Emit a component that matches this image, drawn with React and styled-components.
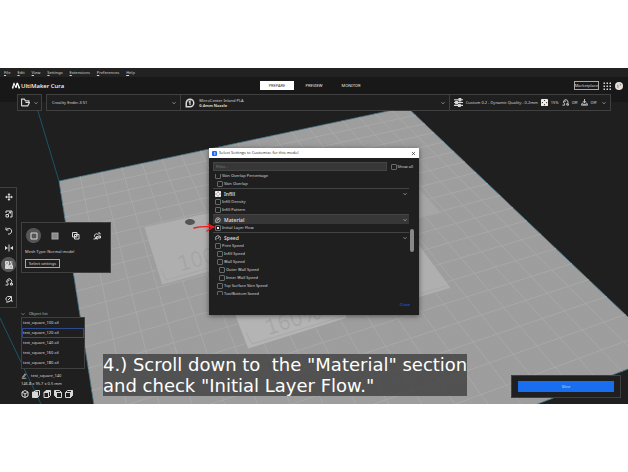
import React from "react";
import styled, { createGlobalStyle } from "styled-components";

const GlobalStyle = createGlobalStyle`
  * {
    box-sizing: border-box;
  }

  body {
    margin: 0;
    background: #fff;
    color: #d8d8d8;
    font-family: "Noto Sans", "Open Sans", sans-serif;
    font-size: 4px;
    line-height: 6px;
  }

  button, input {
    font: inherit;
    color: inherit;
  }
`;

const Page = styled.div`
  display: flex;
  flex-direction: column;
  min-height: 100vh;
  padding: 68px 0;
`;

const Window = styled.main`
  position: relative;
  display: flex;
  flex: 1;
  flex-direction: column;
  overflow: hidden;
  background: #1f1f1f;
`;

const Layer = styled.svg`
  position: absolute;
  inset: 0;
  width: 100%;
  height: 100%;
  pointer-events: none;
`;

const MenuBar = styled.nav`
  position: relative;
  display: flex;
  gap: 7px;
  height: 9px;
  padding: 0 4px;
  background: #222;
  line-height: 9px;
`;

const MenuLink = styled.a`
  color: #d4d4d4;
  text-decoration: none;

  &::first-letter {
    text-decoration: underline;
  }
`;

const TopBar = styled.header`
  position: relative;
  display: grid;
  grid-template-columns: 1fr auto 1fr;
  align-items: center;
  height: 17px;
  padding: 0 5px;
  background: #181818;
`;

const Brand = styled.h1`
  display: flex;
  align-items: center;
  gap: 1px;
  margin: 0;
  padding-left: 7px;
  color: #fff;
  font-size: 6px;
  font-weight: 500;
  line-height: 8px;
`;

const Stages = styled.nav`
  display: flex;
  gap: 3px;
`;

const StageButton = styled.button`
  width: 34px;
  height: 9px;
  padding: 0;
  border: 0;
  background: ${props => (props.$active ? "#fff" : "transparent")};
  color: ${props => (props.$active ? "#333" : "#e8e8e8")};
`;

const Account = styled.div`
  display: flex;
  align-items: center;
  justify-content: flex-end;
  gap: 4px;
`;

const OutlineButton = styled.button`
  height: 9px;
  padding: 0 ${props => props.$pad || 0}px;
  border: 1px solid #a8a8a8;
  background: transparent;
  line-height: 6px;
`;

const ConfigBar = styled.section`
  position: relative;
  display: flex;
  gap: 4px;
  height: 17px;
  padding: 0 17px;
  background: linear-gradient(#181818 50%, transparent 50%);
`;

const FileButton = styled.button`
  display: flex;
  align-items: center;
  justify-content: space-between;
  width: 25px;
  padding: 0 3px;
  border: 1px solid #404040;
  background: #1f1f1f;
`;

const ConfigGroup = styled.div`
  display: grid;
  flex: 1;
  grid-template-columns: 134fr 270fr 162fr;
  border: 1px solid #404040;
  background: #1f1f1f;
`;

const ConfigButton = styled.button`
  display: flex;
  align-items: center;
  gap: ${props => props.$gap || 4}px;
  min-width: 0;
  padding: 0 4px;
  border: 0;
  border-left: 1px solid ${props => (props.$first ? "transparent" : "#404040")};
  background: transparent;
  text-align: left;
  line-height: 5px;
  white-space: nowrap;

  > :last-child {
    margin-left: auto;
  }
`;

const Workspace = styled.section`
  position: relative;
  display: flex;
  flex: 1;
  flex-direction: column;
  gap: 3px;
  padding-top: 76px;
`;

const ToolRow = styled.div`
  display: flex;
  align-items: flex-start;
  gap: 4px;
`;

const Toolbar = styled.div`
  display: flex;
  flex-direction: column;
  width: 17px;
  border: 1px solid #404040;
  border-left: 0;
  background: #1f1f1f;
`;

const ToolButton = styled.button`
  display: grid;
  place-items: center;
  width: 17px;
  height: 17px;
  padding: 0;
  border: 0;
  background: ${props =>
    props.$active ? "radial-gradient(circle, #555 7px, transparent 8px)" : "none"};
`;

const ToolPanel = styled.div`
  display: flex;
  flex-direction: column;
  align-items: flex-start;
  gap: 4px;
  width: 90px;
  margin-top: 35px;
  padding: 4px 3px;
  border: 1px solid #404040;
  background: #1f1f1f;
`;

const MeshTypes = styled.div`
  display: flex;
  gap: 4px;
  margin-bottom: 1px;
`;

const ObjectPanel = styled.section`
  width: 64px;
  margin-left: 21px;
`;

const ObjectHeader = styled.h2`
  display: flex;
  align-items: center;
  gap: 4px;
  margin: 0;
  font-size: 4px;
  font-weight: 400;
  color: #bbb;
`;

const ObjectList = styled.ul`
  margin: 0;
  padding: 0;
  border: 1px solid #404040;
  background: #1f1f1f;
  list-style: none;
`;

const ObjectItem = styled.li`
  border: 1px solid ${props => (props.$selected ? "#2c4a8c" : "transparent")};
  line-height: 8px;
`;

const ObjectInfo = styled.div`
  display: flex;
  flex-direction: column;
  gap: 2px;
  padding-top: 4px;
`;

const InfoLine = styled.div`
  display: flex;
  align-items: center;
  gap: 4px;
`;

const Views = styled.div`
  display: flex;
  gap: 3px;
  padding-top: 1px;
`;

const ViewButton = styled.button`
  display: flex;
  padding: 0;
  border: 0;
  background: none;
`;

const SlicePanel = styled.div`
  position: absolute;
  right: 7px;
  bottom: 6px;
  width: 110px;
  padding: 5px 6px;
  border: 1px solid #404040;
  background: #1f1f1f;
`;

const SliceButton = styled.button`
  display: block;
  width: 100%;
  height: 11px;
  padding: 0;
  border: 0;
  background: #196ef0;
`;

const Dialog = styled.section`
  position: absolute;
  top: 80px;
  left: 50%;
  width: 210px;
  margin-left: -105px;
  background: #1f1f1f;
  box-shadow: 0 1px 5px rgba(0, 0, 0, 0.5);
`;

const DialogTitle = styled.header`
  display: flex;
  align-items: center;
  gap: 2px;
  height: 10px;
  padding: 0 3px;
  background: #fff;
  color: #222;
`;

const TitleText = styled.h2`
  flex: 1;
  margin: 0;
  font-family: "Open Sans", sans-serif;
  font-size: 4px;
  font-weight: 400;
`;

const CloseButton = styled.button`
  display: flex;
  padding: 0;
  border: 0;
  background: none;
`;

const FilterRow = styled.div`
  display: flex;
  align-items: center;
  gap: 4px;
  padding: 4px 6px 3px 4px;
`;

const FilterInput = styled.input`
  flex: 1;
  min-width: 0;
  height: 9px;
  padding: 0 2px;
  border: 1px solid #444;
  background: #373737;

  &::placeholder {
    color: #777;
  }
`;

const Check = styled.label`
  display: flex;
  align-items: center;
  gap: 1px;
  height: 8px;
  padding-left: ${props => props.$depth * 2}px;
  white-space: nowrap;
`;

const Checkbox = styled.input`
  appearance: none;
  display: grid;
  place-items: center;
  width: 6px;
  height: 6px;
  margin: 0;
  border: 1px solid #686868;
  border-radius: 1px;

  &:checked::after {
    content: "";
    width: 2px;
    height: 2px;
    background: #e8e8e8;
  }
`;

const SettingsArea = styled.div`
  display: flex;
  gap: 1px;
  height: 121px;
  padding: 0 5px 0 4px;
  overflow: hidden;
`;

const SettingsList = styled.div`
  flex: 1;
  margin-top: -2px;
`;

const SettingRow = styled.div`
  padding-left: 2px;
`;

const CategoryButton = styled.button`
  display: flex;
  align-items: center;
  gap: 3px;
  width: 100%;
  height: 10px;
  padding: 0 2px;
  border: 0;
  border-top: 1px solid #444;
  background: ${props => (props.$highlight ? "#373737" : "transparent")};
  font-size: 5px;
  font-weight: 600;
  text-align: left;

  > span {
    flex: 1;
  }
`;

const ScrollTrack = styled.div`
  width: 4px;
  padding-top: 55px;
`;

const ScrollThumb = styled.div`
  height: 23px;
  border-radius: 2px;
  background: #888;
`;

const DialogFooter = styled.footer`
  display: flex;
  justify-content: flex-end;
  padding: 7px 9px;
`;

const TextButton = styled.button`
  padding: 0;
  border: 0;
  background: none;
  color: #196ef0;
`;

const Caption = styled.p`
  position: absolute;
  bottom: 8px;
  left: 103px;
  margin: 0;
  background: rgba(60, 60, 60, 0.78);
  color: #fff;
  font-family: "DejaVu Sans", sans-serif;
  font-size: 18px;
  line-height: 21px;
  white-space: pre;
`;

const icons = {
  chevron: <path d="M2 5l6 6 6-6" strokeWidth="2.4" />,
  cross: <path d="M3 3l10 10M13 3L3 13" />,
  folder: <path d="M1 14V2h5l2 3h6v3M1 14h11l3-6H8" />,
  move: (
    <>
      <path d="M8 3v10M3 8h10" />
      <path d="M8 0l3 4H5zM8 16l3-4H5zM0 8l4-3v6zM16 8l-4-3v6z" fill="currentColor" stroke="none" />
    </>
  ),
  scale: <path d="M2 6V2h12v12h-4M2 9h5v5H2zM7 7l4-3M8 4h3v3" />,
  rotate: <path d="M2 1v5h5M3 5c4-5 12-1 10 5-1 3-4 5-7 4" />,
  mirror: (
    <>
      <path d="M8 1v14" />
      <path d="M0 4l6 4-6 4zM16 4l-6 4 6 4z" fill="currentColor" stroke="none" />
    </>
  ),
  perModel: (
    <>
      <path d="M1 1h6v6H1zM1 9h6v6H1zM9 9h6v6H9z" fill="currentColor" />
      <path d="M9 2h6M9 6h6M11 1v3M13 5v3M2 12h4M10 11h4" />
      <path d="M3 4h2M11 12h2" stroke="#444" />
    </>
  ),
  support: <path d="M1 14h5v-3a5 5 0 1 1 5 0v3h4M5 7l4-3M11 11h4v3" />,
  paint: <path d="M2 14h5M3 11a5 5 0 0 1 5-8h5v5a5 5 0 0 1-8 4M6 10l6-6M11 11h3v3" />,
  square: <path d="M2 2h12v12H2z" />,
  mesh: (
    <>
      <path d="M1 1h14v14H1z" fill="#a4a4a4" stroke="none" />
      <path d="M1 6h14M1 10h14M6 2v12M10 2v12" stroke="#6a6a6a" strokeWidth="1" />
    </>
  ),
  overlap: <path d="M1 1h9v9H1zM5 5h9v9H5zM6 10l4-4" />,
  supportMesh: <path d="M1 14h4v-3a4 4 0 1 1 6-4M7 9h3v5H7zM12 8h3v4h-3zM10 2h4v3" />,
  spool: (
    <>
      <path d="M2 14V8a6 6 0 1 1 6 6z" strokeWidth="2.4" />
      <path d="M6 7l2-2v6" />
    </>
  ),
  sliders: (
    <>
      <path d="M0 3h16M0 8h16M0 13h16" />
      <path d="M9 1h3v4H9zM3 6h3v4H3zM8 11h3v4H8z" fill="currentColor" />
    </>
  ),
  infill: (
    <>
      <rect width="16" height="16" rx="2" fill="#f0f0f0" stroke="none" />
      <path d="M6 2h4L8 5zM6 14h4l-2-3zM2 6v4l3-2zM14 6v4l-3-2z" fill="#222" stroke="none" />
    </>
  ),
  adhesion: <path d="M8 0v8M5 5l3 4 3-4M4 9H3l-2 5h14l-2-5h-1M4 12h8" />,
  material: <path d="M2 14V8a6 6 0 1 1 6 6H2M5 10l6-5M8 5v3" />,
  gauge: <path d="M3 14a7 7 0 1 1 10 0M8 10l3-5M5 8v2" />,
  pencil: <path d="M2 14h12M5 10l6-8 2 2-6 7H4z" />,
  cube: <path d="M8 1l6 3v8l-6 3-6-3V4zM2 4l6 4 6-4M8 8v7" />,
  front: (
    <>
      <path d="M4 4l3-3h8v9l-3 4" />
      <path d="M1 4h10v11H1z" fill="currentColor" />
    </>
  ),
  top: (
    <>
      <path d="M2 5h9v10H2zM11 15l4-4V2" />
      <path d="M2 5l4-4h9l-4 4z" fill="currentColor" />
    </>
  ),
  left: (
    <>
      <path d="M5 5h10v10H5zM2 1h9l4 4" />
      <path d="M1 1l4 4v10l-4-4z" fill="currentColor" />
    </>
  ),
  right: (
    <>
      <path d="M1 5h10v10H1zM1 5l4-4h10" />
      <path d="M11 5l4-4v10l-4 4z" fill="currentColor" />
    </>
  ),
  apps: (
    <path
      d="M1 1h3v3H1zM7 1h3v3H7zM13 1h3v3h-3zM1 7h3v3H1zM7 7h3v3H7zM13 7h3v3h-3zM1 13h3v3H1zM7 13h3v3H7zM13 13h3v3h-3z"
      fill="currentColor"
      stroke="none"
    />
  )
};

const Icon = ({ name, size = 8 }) => (
  <svg
    width={size}
    height={size}
    viewBox="0 0 16 16"
    fill="none"
    stroke="currentColor"
    strokeWidth="2"
    aria-hidden="true"
  >
    {icons[name]}
  </svg>
);

const menus = ["File", "Edit", "View", "Settings", "Extensions", "Preferences", "Help"];
const stages = ["PREPARE", "PREVIEW", "MONITOR"];
const tools = [
  ["move", "Move"],
  ["scale", "Scale"],
  ["rotate", "Rotate"],
  ["mirror", "Mirror"],
  ["perModel", "Per model settings"],
  ["support", "Support blocker"],
  ["paint", "Support eraser"]
];
const meshTypes = [
  ["square", "Normal model"],
  ["mesh", "Print as support"],
  ["overlap", "Modify overlaps"],
  ["supportMesh", "No support overlap"]
];
const objects = [100, 120, 140, 160, 180];
const views = ["cube", "front", "top", "left", "right"];

const settings = [
  { label: "Skin Overlap Percentage", depth: 0 },
  { label: "Skin Overlap", depth: 1 },
  { label: "Infill", icon: "infill" },
  { label: "Infill Density", depth: 0 },
  { label: "Infill Pattern", depth: 0 },
  { label: "Material", icon: "material", highlight: true },
  { label: "Initial Layer Flow", depth: 0, checked: true },
  { label: "Speed", icon: "gauge" },
  { label: "Print Speed", depth: 0 },
  { label: "Infill Speed", depth: 1 },
  { label: "Wall Speed", depth: 1 },
  { label: "Outer Wall Speed", depth: 2 },
  { label: "Inner Wall Speed", depth: 2 },
  { label: "Top Surface Skin Speed", depth: 1 },
  { label: "Top/Bottom Speed", depth: 1 }
];

// corners of the build plate: back left, back right, front right, front left
const plate = [[59, 181], [407, 107], [667, 354], [119, 566]];
const cells = 19;

// maps a point of the unit square onto the plate in perspective
const project = (u, v) => {
  const [[x0, y0], [x1, y1], [x2, y2], [x3, y3]] = plate;
  const dx1 = x1 - x2;
  const dx2 = x3 - x2;
  const sx = x0 - x1 + x2 - x3;
  const dy1 = y1 - y2;
  const dy2 = y3 - y2;
  const sy = y0 - y1 + y2 - y3;
  const det = dx1 * dy2 - dx2 * dy1;
  const g = (sx * dy2 - dx2 * sy) / det;
  const h = (dx1 * sy - sx * dy1) / det;
  const w = g * u + h * v + 1;
  return [
    ((x1 - x0 + g * x1) * u + (x3 - x0 + h * x3) * v + x0) / w,
    ((y1 - y0 + g * y1) * u + (y3 - y0 + h * y3) * v + y0) / w
  ];
};

const gridPath = count =>
  Array.from({ length: count - 1 }, (_, i) => {
    const t = (i + 1) / count;
    return `M${project(t, 0)}L${project(t, 1)}M${project(0, t)}L${project(1, t)}`;
  }).join("");

const Scene = () => (
  <Layer viewBox="0 68 628 336" preserveAspectRatio="xMidYMid slice" aria-hidden="true">
    <polygon points={plate.join(" ")} fill="#9d9d9d" stroke="#3f7183" strokeWidth="0.8" />
    <path d={gridPath(cells * 10)} stroke="#a6a6a6" strokeWidth="0.3" opacity="0.5" />
    <path d={gridPath(cells)} stroke="#a9a9a9" strokeWidth="0.9" />
    <path d="M37 108L59 181M0 318L41 404" stroke="#1c5468" fill="none" />
    <g fill="#afafaf" stroke="#9c9c9c" strokeWidth="0.5">
      <path d="M144 227L225 209L245 262L162 285z" />
      <path d="M227 294L322 264L347 318L248 349z" fill="#b4b4b4" />
      <path d="M400 168L442 213L400 223z" fill="#a6a6a6" />
      <path d="M400 219L451 288L400 303z" />
    </g>
    <g fill="none" stroke="#9e9e9e" strokeWidth="0.5">
      <path d="M246 332L252 344L344 316M419 294L446 286M161 269L166 280L209 268" />
      <g fontFamily="DejaVu Sans" fontWeight="200" fontSize="20" stroke="#a0a0a0">
        <text transform="translate(180 271) rotate(-15)">100%</text>
        <text transform="translate(268 335) rotate(-18)">160%</text>
      </g>
    </g>
    <ellipse cx="190" cy="222" rx="5" ry="3" fill="#555" />
  </Layer>
);

const Header = () => (
  <>
    <MenuBar>
      {menus.map(menu => (
        <MenuLink href="#" key={menu}>{menu}</MenuLink>
      ))}
    </MenuBar>
    <TopBar>
      <Brand>
        <svg width="8" height="7" viewBox="0 0 16 14" fill="#fff" aria-hidden="true">
          <path d="M0 13V11L3 2Q4 0 5 2L7 8 9 2Q11 0 12 2L16 11V13H13L11 5 9 12H7L4 5 3 13z" />
        </svg>
        UltiMaker Cura
      </Brand>
      <Stages>
        {stages.map((stage, i) => (
          <StageButton key={stage} $active={i === 0}>{stage}</StageButton>
        ))}
      </Stages>
      <Account>
        <OutlineButton>Marketplace</OutlineButton>
        <Icon name="apps" />
        <svg width="8" height="8" viewBox="0 0 16 16" aria-hidden="true">
          <circle cx="8" cy="8" r="8" fill="#e4e0dc" />
          <path d="M4 5l3 1v6H5z" fill="#c98471" />
          <path d="M9 2l4 4-3 2z" fill="#9b9590" />
        </svg>
      </Account>
    </TopBar>
    <ConfigBar>
      <FileButton aria-label="Open file">
        <Icon name="folder" size={9} />
        <Icon name="chevron" size={4} />
      </FileButton>
      <ConfigGroup>
        <ConfigButton $first>
          Creality Ender-3 S1
          <Icon name="chevron" size={4} />
        </ConfigButton>
        <ConfigButton>
          <Icon name="spool" size={10} />
          <span>
            MicroCenter Inland PLA
            <br />
            <b>0.4mm Nozzle</b>
          </span>
          <Icon name="chevron" size={4} />
        </ConfigButton>
        <ConfigButton $gap={3}>
          <Icon name="sliders" size={9} />
          Custom 0.2 - Dynamic Quality - 0.2mm
          <Icon name="infill" size={7} />
          15%
          <Icon name="support" size={7} />
          Off
          <Icon name="adhesion" size={7} />
          Off
          <Icon name="chevron" size={4} />
        </ConfigButton>
      </ConfigGroup>
    </ConfigBar>
  </>
);

const SettingsDialog = () => (
  <Dialog role="dialog" aria-labelledby="dialog-title">
    <DialogTitle>
      <svg width="5" height="5" viewBox="0 0 10 10" aria-hidden="true">
        <rect width="10" height="10" rx="2" fill="#196ef0" />
        <path d="M4 3h3M4 5h3M4 7h3" stroke="#fff" />
      </svg>
      <TitleText id="dialog-title">Select Settings to Customize for this model</TitleText>
      <CloseButton aria-label="Close dialog">
        <Icon name="cross" size={5} />
      </CloseButton>
    </DialogTitle>
    <FilterRow>
      <FilterInput placeholder="Filter..." aria-label="Filter" />
      <Check $depth={0}>
        <Checkbox type="checkbox" />
        Show all
      </Check>
    </FilterRow>
    <SettingsArea>
      <SettingsList>
        {settings.map(({ label, icon, depth, highlight, checked }) =>
          icon ? (
            <CategoryButton key={label} $highlight={highlight}>
              <Icon name={icon} size={6} />
              <span>{label}</span>
              <Icon name="chevron" size={4} />
            </CategoryButton>
          ) : (
            <SettingRow key={label}>
              <Check $depth={depth}>
                <Checkbox type="checkbox" defaultChecked={checked} />
                {label}
              </Check>
            </SettingRow>
          )
        )}
      </SettingsList>
      <ScrollTrack>
        <ScrollThumb />
      </ScrollTrack>
    </SettingsArea>
    <DialogFooter>
      <TextButton>Close</TextButton>
    </DialogFooter>
  </Dialog>
);

const App = () => (
  <Page>
    <GlobalStyle />
    <Window>
      <Scene />
      <Header />
      <Workspace>
        <ToolRow>
          <Toolbar>
            {tools.map(([icon, label]) => (
              <ToolButton key={icon} aria-label={label} $active={icon === "perModel"}>
                <Icon name={icon} />
              </ToolButton>
            ))}
          </Toolbar>
          <ToolPanel>
            <MeshTypes>
              {meshTypes.map(([icon, label], i) => (
                <ToolButton key={icon} aria-label={label} $active={i === 0}>
                  <Icon name={icon} />
                </ToolButton>
              ))}
            </MeshTypes>
            <span>Mesh Type: Normal model</span>
            <OutlineButton $pad={3}>Select settings</OutlineButton>
          </ToolPanel>
        </ToolRow>
        <ObjectPanel>
          <ObjectHeader>
            <Icon name="chevron" size={4} />
            Object list
          </ObjectHeader>
          <ObjectList>
            {objects.map(size => (
              <ObjectItem key={size} $selected={size === 120}>
                test_square_{size}.stl
              </ObjectItem>
            ))}
          </ObjectList>
          <ObjectInfo>
            <InfoLine>
              <Icon name="pencil" size={6} />
              test_square_140
            </InfoLine>
            <InfoLine>146.8 x 95.7 x 0.5 mm</InfoLine>
            <Views>
              {views.map(view => (
                <ViewButton key={view} aria-label={`${view} view`}>
                  <Icon name={view} />
                </ViewButton>
              ))}
            </Views>
          </ObjectInfo>
        </ObjectPanel>
        <SlicePanel>
          <SliceButton>Slice</SliceButton>
        </SlicePanel>
      </Workspace>
      <SettingsDialog />
      <Caption>{'4.) Scroll down to  the "Material" section\nand check "Initial Layer Flow."'}</Caption>
      <Layer viewBox="0 68 628 336" preserveAspectRatio="xMidYMid slice" aria-hidden="true">
        <path
          d="M194 228q8-2 20-1M208 224q3 2 6 3-3 1-7 4"
          fill="none"
          stroke="#ee1c1c"
          strokeWidth="1.3"
          strokeLinecap="round"
        />
      </Layer>
    </Window>
  </Page>
);

export default App;
